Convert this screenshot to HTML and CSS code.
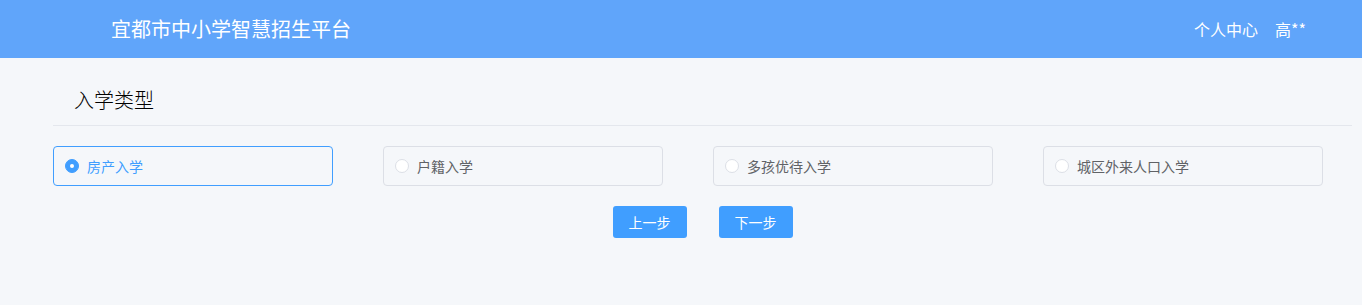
FILE: index.html
```html
<!DOCTYPE html>
<html lang="zh-CN">
<head>
<meta charset="utf-8">
<title>宜都市中小学智慧招生平台</title>
<link rel="stylesheet" href="styles.css">
</head>
<body>
<header class="topbar">
  <div class="brand">宜都市中小学智慧招生平台</div>
  <nav class="user-nav">
    <a class="nav-link">个人中心</a>
    <a class="nav-link">高**</a>
  </nav>
</header>
<main class="content">
  <h2 class="section-title">入学类型</h2>
  <div class="radio-group">
    <label class="radio-box checked"><span class="radio-dot"></span><span class="radio-label">房产入学</span></label>
    <label class="radio-box"><span class="radio-dot"></span><span class="radio-label">户籍入学</span></label>
    <label class="radio-box"><span class="radio-dot"></span><span class="radio-label">多孩优待入学</span></label>
    <label class="radio-box"><span class="radio-dot"></span><span class="radio-label">城区外来人口入学</span></label>
  </div>
  <div class="actions">
    <button class="btn">上一步</button>
    <button class="btn">下一步</button>
  </div>
</main>
</body>
</html>
```
FILE: styles.css
```css
* { box-sizing: border-box; }
html, body { margin: 0; padding: 0; }
body {
  background: #f5f7fa;
  font-family: "Noto Sans CJK SC", "Noto Sans", sans-serif;
  height: 305px;
}
.topbar {
  height: 58px;
  background: #60a5fa;
  color: #fff;
  display: flex;
  align-items: center;
  justify-content: space-between;
  padding: 0 56px 0 111px;
}
.brand { font-size: 20px; line-height: 1; }
.user-nav { display: flex; gap: 17px; font-size: 16px; }
.nav-link { color: #fff; cursor: pointer; }
.content { padding: 0 10px 0 53px; }
.section-title {
  margin: 0;
  font-weight: 300;
  font-size: 20px;
  color: #000;
  padding: 0 0 15px 21px;
  height: 68px;
  line-height: 1;
  display: flex;
  align-items: flex-end;
  border-bottom: 1px solid #e4e7ed;
}
.radio-group {
  display: flex;
  gap: 50px;
  margin-top: 20px;
}
.radio-box {
  width: 280px;
  height: 40px;
  border: 1px solid #dcdfe6;
  border-radius: 4px;
  display: flex;
  align-items: center;
  padding-left: 11px;
  font-size: 14px;
  color: #606266;
  cursor: pointer;
}
.radio-dot {
  width: 14px;
  height: 14px;
  border-radius: 50%;
  border: 1px solid #dcdfe6;
  background: #fff;
  margin-right: 8px;
  position: relative;
}
.radio-box.checked { border-color: #409eff; color: #409eff; }
.radio-box.checked .radio-dot { background: #409eff; border-color: #409eff; }
.radio-box.checked .radio-dot::after {
  content: "";
  position: absolute;
  width: 4px;
  height: 4px;
  border-radius: 50%;
  background: #fff;
  left: 4px;
  top: 4px;
}
.actions {
  display: flex;
  justify-content: center;
  gap: 32px;
  margin-top: 20px;
}
.btn {
  width: 74px;
  height: 32px;
  border: none;
  border-radius: 3px;
  background: #409eff;
  color: #fff;
  font-family: inherit;
  font-size: 14px;
  padding: 0;
  cursor: pointer;
}
```
